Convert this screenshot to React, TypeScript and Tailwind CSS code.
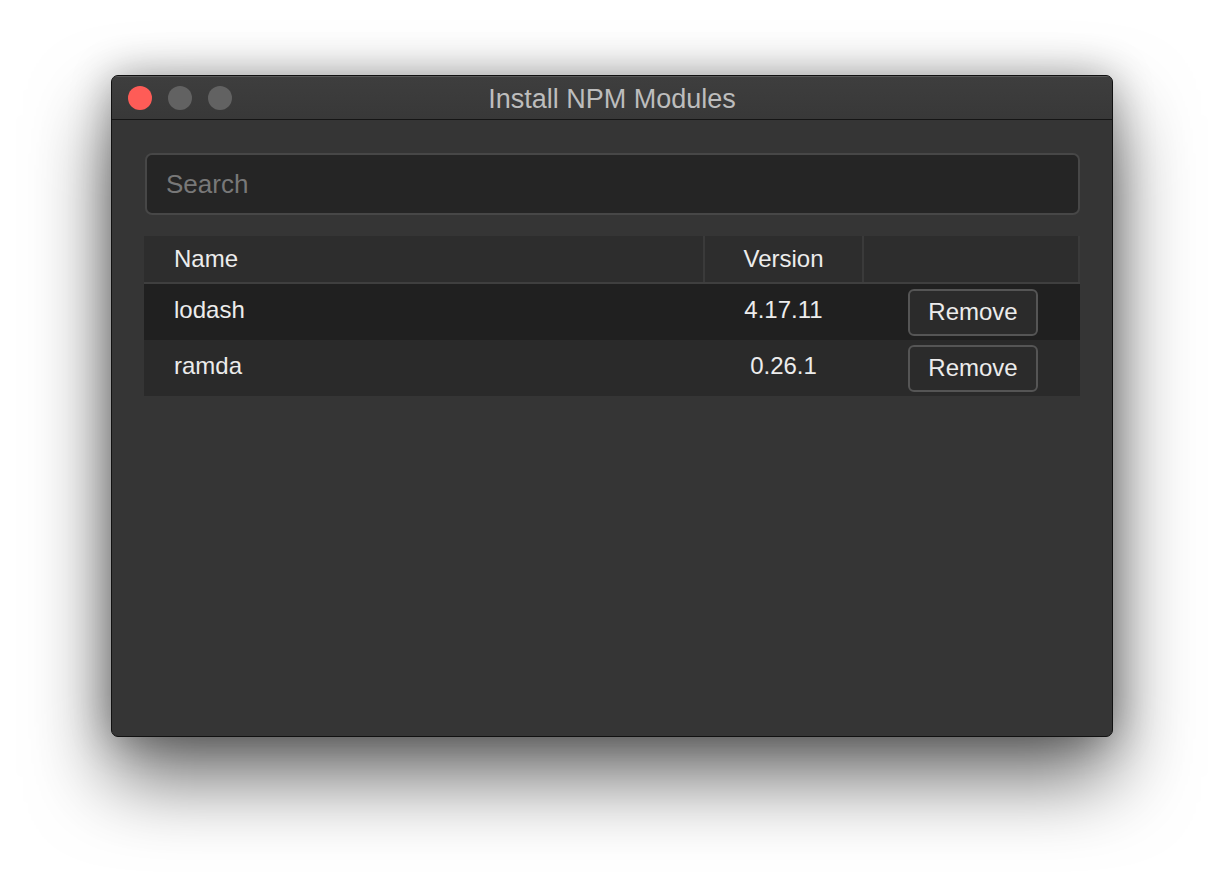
export default function App() {
  const modules = [
    { name: "lodash", version: "4.17.11" },
    { name: "ramda", version: "0.26.1" },
  ]

  return (
    <div
      className="w-[1224px] h-[884px] bg-white pt-[75px] pl-[111px] overflow-hidden"
      style={{ fontFamily: '"Liberation Sans", Arial, sans-serif' }}
    >
      {/* WINDOW */}
      <div className="w-[1002px] h-[662px] rounded-[7px] border border-[#111] bg-[#353535] shadow-[0_40px_80px_rgba(0,0,0,0.6),0_0_40px_rgba(0,0,0,0.3)] overflow-hidden flex flex-col">

        {/* TITLE BAR */}
        <div className="relative h-[44px] shrink-0 flex items-center bg-gradient-to-b from-[#3e3e3e] to-[#383838] border-b border-[#151515] border-t border-t-[#5a5a5a]">
          <div className="flex gap-[16px] pl-[16px]">
            <div className="w-[24px] h-[24px] rounded-full bg-[#fe5c57]" />
            <div className="w-[24px] h-[24px] rounded-full bg-[#626262]" />
            <div className="w-[24px] h-[24px] rounded-full bg-[#626262]" />
          </div>
          <div className="absolute inset-0 pt-[2px] flex items-center justify-center text-[27px] text-[#bdbdbd] pointer-events-none">
            Install NPM Modules
          </div>
        </div>

        {/* CONTENT */}
        <div className="flex-1 px-[32px] pt-[33px]">

          <div className="ml-[1px] h-[62px] rounded-[7px] border-2 border-[#474747] bg-[#252525] flex items-center px-[19px] text-[26px] text-[#787878]">
            Search
          </div>

          {/* TABLE */}
          <div className="mt-[21px] w-[936px] text-[24px] text-[#ececec]">
            <div className="flex h-[48px] bg-[#2d2d2d] border-b-2 border-[#3f3f3f]">
              <div className="w-[559px] flex items-center pl-[30px]">Name</div>
              <div className="w-[159px] flex items-center justify-center border-l-2 border-[#3a3a3a]">Version</div>
              <div className="flex-1 border-l-2 border-r-2 border-[#3a3a3a]" />
            </div>

            {modules.map((m, i) => (
              <div
                key={m.name}
                className={`flex h-[56px] ${i === 0 ? "bg-[#202020]" : "bg-[#2a2a2a]"}`}
              >
                <div className="w-[559px] flex items-center pl-[30px] pb-[4px]">{m.name}</div>
                <div className="w-[161px] flex items-center justify-center pb-[4px]">{m.version}</div>
                <div className="flex-1 flex items-center justify-center pl-[2px]">
                  <button className="w-[130px] h-[47px] rounded-[6px] border-2 border-[#555] bg-[#2b2b2b] text-[24px] text-[#ececec]">
                    Remove
                  </button>
                </div>
              </div>
            ))}
          </div>

        </div>

      </div>
    </div>
  )
}
